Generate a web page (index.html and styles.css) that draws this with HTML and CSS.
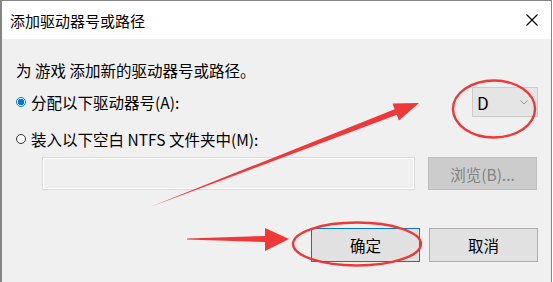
FILE: index.html
```html
<!DOCTYPE html>
<html lang="zh-CN">
<head>
    <meta charset="UTF-8">
    <title>添加驱动器号或路径</title>
    <link rel="stylesheet" href="styles.css">
</head>
<body>
    <div class="dialog">
        <div class="titlebar">
            <span class="title">添加驱动器号或路径</span>
            <svg class="close" width="12" height="12" viewBox="0 0 12 12">
                <path d="M0.5 0.5 L11.5 11.5 M11.5 0.5 L0.5 11.5" stroke="#000" stroke-width="1.1" fill="none"/>
            </svg>
        </div>

        <div class="content">
            <p class="intro">为 游戏 添加新的驱动器号或路径。</p>

            <div class="row-drive">
                <label class="radio"><span class="dot checked"></span>分配以下驱动器号(A):</label>
                <div class="select">
                    <span>D</span>
                    <svg width="8" height="5" viewBox="0 0 8 5">
                        <path d="M0.5 0.5 L4 4 L7.5 0.5" stroke="#9a9a9a" stroke-width="1" fill="none"/>
                    </svg>
                </div>
            </div>

            <div class="row-folder">
                <label class="radio"><span class="dot"></span>装入以下空白 NTFS 文件夹中(M):</label>
            </div>

            <div class="path-row">
                <div class="path-input"></div>
                <button class="btn disabled">浏览(B)...</button>
            </div>

            <div class="actions">
                <button class="btn primary">确定</button>
                <button class="btn">取消</button>
            </div>
        </div>

        <!-- 标注 -->
        <svg class="marks" width="553" height="282" viewBox="0 0 553 282">
            <ellipse cx="494" cy="109" rx="41" ry="28.5" fill="none" stroke="#f03838" stroke-width="2.4"/>
            <ellipse cx="357" cy="244" rx="64" ry="21.5" fill="none" stroke="#f03838" stroke-width="2.4"/>
            <polygon points="150,207 394.6,109.2 392.5,103.6 419,103 398.9,120.4 396.8,114.8" fill="#f03838"/>
            <polygon points="187,238.5 265,236 265,228 289,239 265,251 265,242 187,239.5" fill="#f03838"/>
        </svg>
    </div>
</body>
</html>
```

FILE: styles.css
```css
body {
    margin: 0;
    background: #fff;
    font-family: "Noto Sans CJK SC", "Noto Sans", sans-serif;
    color: #000;
}

.dialog {
    position: relative;
    width: 552px;
    height: 282px;
    box-sizing: border-box;
    border: 1px solid #858585;
    border-left-width: 2px;
    border-bottom: none;
    background: #f0f0f0;
    overflow: hidden;
}

.titlebar {
    height: 38px;
    background: #fff;
    display: flex;
    align-items: center;
    justify-content: space-between;
    padding: 0 13px 0 8px;
}

.title {
    font-size: 15px;
}

.content {
    padding: 22px 13px 0 14px;
    font-size: 15.5px;
}

.intro {
    margin: 0;
    line-height: 18px;
}

.row-drive {
    display: flex;
    align-items: center;
    justify-content: space-between;
    height: 30px;
    margin-top: 8px;
}

.row-folder {
    display: flex;
    align-items: center;
    height: 20px;
    margin-top: 12px;
}

.radio {
    display: flex;
    align-items: center;
    gap: 5px;
}

.dot {
    width: 8px;
    height: 8px;
    border: 1px solid #333;
    border-radius: 50%;
    background: #fff;
}

.dot.checked {
    border-color: #0078d7;
    background: radial-gradient(circle, #0078d7 0 3px, #fff 3.5px);
}

.select {
    width: 66px;
    height: 30px;
    box-sizing: border-box;
    border: 1px solid #cccccc;
    background: #e5e5e5;
    display: flex;
    align-items: center;
    justify-content: space-between;
    padding: 0 9px 0 4px;
    font-size: 17px;
}

.path-row {
    display: flex;
    gap: 13px;
    margin-top: 8px;
    padding-left: 26px;
    height: 33px;
}

.path-input {
    width: 373px;
    height: 33px;
    box-sizing: border-box;
    border: 1px solid #dcdcdc;
    box-shadow: inset 0 0 0 1px #fff;
    background: #f0f0f0;
}

.btn {
    width: 109px;
    height: 34px;
    box-sizing: border-box;
    border: 1px solid #adadad;
    background: #e1e1e1;
    font-family: inherit;
    font-size: 15.5px;
    color: #000;
    padding: 0;
}

.btn.disabled {
    height: 33px;
    background: #cccccc;
    border-color: #bfbfbf;
    color: #838383;
}

.btn.primary {
    border: 1px solid #0078d7;
}

.actions {
    display: flex;
    justify-content: flex-end;
    gap: 9px;
    margin-top: 38px;
}

.marks {
    position: absolute;
    left: -2px;
    top: -1px;
    pointer-events: none;
}
```
